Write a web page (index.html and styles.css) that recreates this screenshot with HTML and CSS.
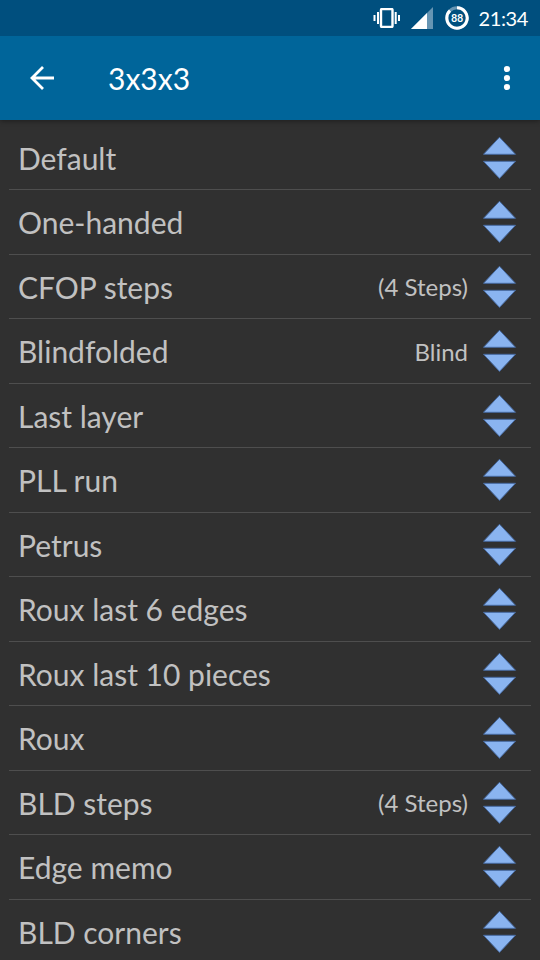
FILE: index.html
```html
<!DOCTYPE html>
<html lang="en">
<head>
<meta charset="utf-8">
<title>3x3x3</title>
<link rel="stylesheet" href="styles.css">
</head>
<body>
<svg class="defs" width="0" height="0"><symbol id="sort" viewBox="0 0 34 44"><path d="M16.500 1.200 32.500 18.300H.5ZM.5 25.300H32.500L16.500 42.400Z" fill="#8ab4f0" stroke="#46699f" stroke-width="1"/></symbol></svg>
<header>
<div class="status">
<svg class="vibrate" viewBox="0 0 28 20" fill="none" stroke="#fff" stroke-width="2"><rect x="8" y="1" width="11.500" height="18" rx="1" stroke-width="2.400"/><path d="M5 4v12M1.500 7v6M22.700 4v12M26 7v6"/></svg>
<svg class="signal" viewBox="0 0 22 22"><path d="M0 22 22 0V22Z" fill="#6695b3"/><path d="M0 22 16 6V22Z" fill="#fff"/></svg>
<svg class="battery" viewBox="0 0 24 24"><circle cx="12" cy="12" r="10.200" fill="none" stroke="#6695b3" stroke-width="3"/><path d="M12 1.800A10.200 10.200 0 1 1 5 4.600" fill="none" stroke="#fff" stroke-width="3"/><text x="12" y="16" text-anchor="middle">88</text></svg>
<span class="clock">21:34</span>
</div>
<div class="toolbar">
<svg class="back" viewBox="0 0 24 24" fill="none" stroke="#fff" stroke-width="2.800"><path d="M24 12H2M13 1 2 12 13 23"/></svg>
<h1>3x3x3</h1>
<svg class="more" viewBox="0 0 8 26" fill="#fff"><circle cx="4" cy="4" r="3.100"/><circle cx="4" cy="13" r="3.100"/><circle cx="4" cy="22" r="3.100"/></svg>
</div>
</header>
<ul class="list">
<li><span class="name">Default</span><svg class="sort"><use href="#sort"/></svg></li>
<li><span class="name">One-handed</span><svg class="sort"><use href="#sort"/></svg></li>
<li><span class="name">CFOP steps</span><span class="note">(4 Steps)</span><svg class="sort"><use href="#sort"/></svg></li>
<li><span class="name">Blindfolded</span><span class="note">Blind</span><svg class="sort"><use href="#sort"/></svg></li>
<li><span class="name">Last layer</span><svg class="sort"><use href="#sort"/></svg></li>
<li><span class="name">PLL run</span><svg class="sort"><use href="#sort"/></svg></li>
<li><span class="name">Petrus</span><svg class="sort"><use href="#sort"/></svg></li>
<li><span class="name">Roux last 6 edges</span><svg class="sort"><use href="#sort"/></svg></li>
<li><span class="name">Roux last 10 pieces</span><svg class="sort"><use href="#sort"/></svg></li>
<li><span class="name">Roux</span><svg class="sort"><use href="#sort"/></svg></li>
<li><span class="name">BLD steps</span><span class="note">(4 Steps)</span><svg class="sort"><use href="#sort"/></svg></li>
<li><span class="name">Edge memo</span><svg class="sort"><use href="#sort"/></svg></li>
<li><span class="name">BLD corners</span><svg class="sort"><use href="#sort"/></svg></li>
</ul>
</body>
</html>
```
FILE: styles.css
```css
* { box-sizing: border-box; }
body { margin: 0; height: 960px; overflow: hidden; background: #303030; color: #c1c1c1; font-family: Lato, "Liberation Sans", sans-serif; }
.defs { display: block; }
header { color: #fff; box-shadow: 0 1px 5px rgba(0, 0, 0, .4); }
.status { height: 36px; background: #004f7e; display: flex; align-items: center; justify-content: flex-end; padding-right: 12px; }
.vibrate { width: 28px; height: 20px; margin-right: 10px; }
.signal { width: 22px; height: 22px; margin-right: 12px; }
.battery { width: 24px; height: 24px; margin-right: 10px; }
.battery text { font-family: Roboto, sans-serif; font-size: 11px; letter-spacing: -.3px; font-weight: 500; fill: #fff; }
.clock { font-size: 20px; letter-spacing: -.4px; }
.toolbar { height: 84px; background: #00659a; display: flex; align-items: center; padding: 0 29px 0 30px; }
.back { width: 24px; height: 24px; }
h1 { margin: 0 auto 0 54px; font-size: 30px; font-weight: 400; line-height: 36px; }
.more { width: 8px; height: 26px; }
.list { list-style: none; margin: 5.6px 9px 0; padding: 0; }
li { height: 64.5px; border-bottom: 1px solid #4e4e4e; display: flex; align-items: center; padding: 1px 14px 0 9px; }
.name { font-size: 30px; line-height: 36px; margin-right: auto; }
.note { font-size: 24px; margin-right: 15px; }
.sort { width: 34px; height: 44px; }
```
